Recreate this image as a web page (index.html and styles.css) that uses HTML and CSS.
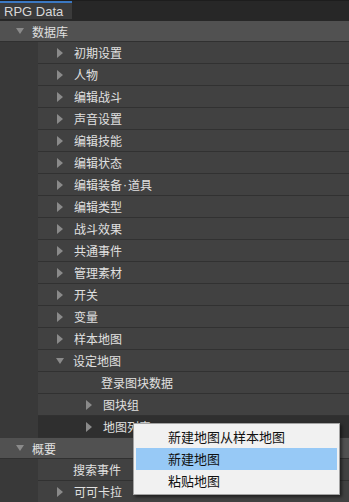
FILE: index.html
```html
<!DOCTYPE html>
<html lang="zh">
<head>
    <meta charset="UTF-8">
    <title>RPG Data</title>
    <link rel="stylesheet" href="styles.css">
</head>
<body>
    <div class="tabbar">
        <div class="tab">RPG Data</div>
    </div>
    <div class="tree">
        <div class="group"><span class="down"></span>数据库</div>
        <div class="row"><span class="arrow"></span>初期设置</div>
        <div class="row"><span class="arrow"></span>人物</div>
        <div class="row"><span class="arrow"></span>编辑战斗</div>
        <div class="row"><span class="arrow"></span>声音设置</div>
        <div class="row"><span class="arrow"></span>编辑技能</div>
        <div class="row"><span class="arrow"></span>编辑状态</div>
        <div class="row"><span class="arrow"></span>编辑装备<span class="dot">·</span>道具</div>
        <div class="row"><span class="arrow"></span>编辑类型</div>
        <div class="row"><span class="arrow"></span>战斗效果</div>
        <div class="row"><span class="arrow"></span>共通事件</div>
        <div class="row"><span class="arrow"></span>管理素材</div>
        <div class="row"><span class="arrow"></span>开关</div>
        <div class="row"><span class="arrow"></span>变量</div>
        <div class="row"><span class="arrow"></span>样本地图</div>
        <div class="row"><span class="arrow open"></span>设定地图</div>
        <div class="row sub leaf">登录图块数据</div>
        <div class="row sub"><span class="arrow"></span>图块组</div>
        <div class="row sub active"><span class="arrow"></span>地图列表</div>
        <div class="group"><span class="down"></span>概要</div>
        <div class="row leaf">搜索事件</div>
        <div class="row"><span class="arrow"></span>可可卡拉</div>
    </div>

    <div class="menu">
        <div class="item">新建地图从样本地图</div>
        <div class="item hover">新建地图</div>
        <div class="item">粘贴地图</div>
    </div>
</body>
</html>
```

FILE: styles.css
```css
body {
    margin: 0;
    padding: 0;
    background-color: #393939;
    font-family: "Noto Sans CJK SC", "Liberation Sans", sans-serif;
    font-size: 12px;
    color: #e0e0e0;
    overflow: hidden;
}
.tabbar {
    background-color: #272727;
    border-top: 1px solid #1d1d1d;
    height: 20px;
    display: flex;
}
.tab {
    width: 72px;
    background-color: #3b3b3b;
    border-top: 2px solid #3b78c2;
    height: 18px;
    line-height: 18px;
    padding-left: 4px;
    box-sizing: border-box;
    font-family: "Liberation Sans", sans-serif;
    font-size: 13px;
    color: #d8d8d8;
}
.group {
    background-color: #515151;
    height: 20px;
    border-bottom: 1px solid #303030;
    display: flex;
    align-items: center;
    padding-left: 16px;
}
.down {
    width: 0;
    height: 0;
    border-top: 6px solid #8a8a8a;
    border-left: 4.5px solid transparent;
    border-right: 4.5px solid transparent;
    margin-right: 8px;
}
.row {
    margin-left: 38px;
    height: 21px;
    background-color: #414141;
    border-bottom: 1px solid #313131;
    display: flex;
    align-items: center;
    padding-left: 19px;
}
.dot {
    font-family: "Liberation Sans", sans-serif;
    padding: 0 1px;
}
.arrow {
    width: 0;
    height: 0;
    border-left: 6px solid #8a8a8a;
    border-top: 5px solid transparent;
    border-bottom: 5px solid transparent;
    margin-right: 11px;
}
.arrow.open {
    border-top: 6px solid #8a8a8a;
    border-left: 4.5px solid transparent;
    border-right: 4.5px solid transparent;
    border-bottom: 0;
    margin-left: -1px;
    margin-right: 9px;
}
.row.leaf {
    padding-left: 35px;
}
.row.sub {
    padding-left: 48px;
}
.row.sub.leaf {
    padding-left: 63px;
}
.row.active {
    background-color: #2f2f2f;
}
.menu {
    position: absolute;
    left: 133px;
    top: 423px;
    width: 207px;
    box-sizing: border-box;
    background-color: #f1f1f1;
    border: 1px solid #a3a3a3;
    box-shadow: 2px 2px 3px rgba(0, 0, 0, 0.5);
    padding: 2px;
}
.item {
    height: 22px;
    line-height: 22px;
    padding-left: 32px;
    font-size: 13px;
    color: #111;
}
.item.hover {
    background-color: #97c9f6;
}
```
